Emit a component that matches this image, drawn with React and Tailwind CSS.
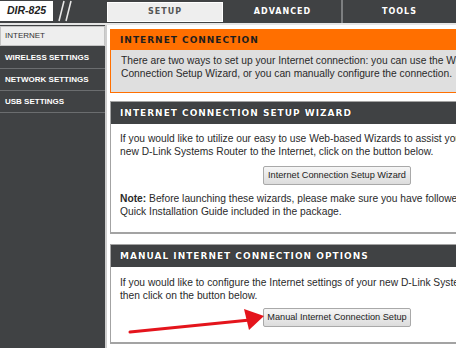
const body = { fontFamily: '"Liberation Sans", Arial, sans-serif' };
const head = { fontFamily: '"DejaVu Sans", Verdana, sans-serif' };

const SideItem = ({ label }) => (
    <div className="h-[22px] flex items-center pl-[5px] border-b border-[#6b6d6f] text-white font-bold text-[8px]" style={body}>
        {label}
    </div>
);

const Button = ({ label }) => (
    <div className="flex justify-center">
        <div className="w-[148px] h-[19px] flex items-center justify-center rounded-[2px] border border-[#a9a9a9] bg-gradient-to-b from-[#f6f6f6] to-[#dcdcdc] text-[9.2px] text-[#222]" style={body}>
            {label}
        </div>
    </div>
);

const DarkBox = ({ title, children, className }) => (
    <div className={"w-[454px] border border-b-2 border-[#a3a3a3] " + className}>
        <div className="h-[22px] bg-[#404244] flex items-center pl-[9px] text-white font-bold text-[9px] tracking-[1px] [text-shadow:0_0_1px_#000]" style={head}>
            {title}
        </div>
        {children}
    </div>
);

export default function App() {
    return (
        <div className="relative w-[456px] h-[348px] overflow-hidden bg-white">
            {/* top bar */}
            <div className="h-[23px] bg-[#404244] flex">
                <div className="w-[105px] flex items-start">
                    <div className="mt-[1px] w-[53px] h-[20px] bg-white flex items-center pl-[7px] text-[10.5px] font-bold italic text-[#222]" style={body}>
                        DIR-825
                    </div>
                    <svg width="22" height="23" viewBox="0 0 22 23" className="ml-[2px]">
                        <line x1="4" y1="21" x2="9" y2="1" stroke="#e8e8e8" strokeWidth="1.6" />
                        <line x1="11" y1="21" x2="16" y2="1" stroke="#e8e8e8" strokeWidth="1.6" />
                    </svg>
                </div>
                <div className="flex flex-1 pl-[2px] font-bold text-[8px] tracking-[1px]" style={head}>
                    <div className="w-[116px] mt-[2px] h-[20px] bg-[#eeeeee] border border-white flex items-center justify-center text-[#555]">SETUP</div>
                    <div className="w-[117px] ml-[1px] flex items-center justify-center text-white">ADVANCED</div>
                    <div className="w-[2px] bg-[#7d7f81]"></div>
                    <div className="flex-1 flex items-center justify-center text-white">TOOLS</div>
                </div>
            </div>
            <div className="h-[2px] bg-[#e6e6e6]"></div>

            <div className="flex h-[323px]">
                {/* sidebar */}
                <div className="w-[105px] shrink-0 bg-[#404244] pt-[1px]">
                    <div className="h-[20px] bg-[#eeeeee] border border-[#c4c4c4] flex items-center pl-[4px] text-[8px] text-[#333]" style={body}>
                        INTERNET
                    </div>
                    <div className="h-[1px]"></div>
                    <SideItem label="WIRELESS SETTINGS" />
                    <SideItem label="NETWORK SETTINGS" />
                    <SideItem label="USB SETTINGS" />
                </div>
                <div className="w-[2px] shrink-0 bg-[#cfcfcf]"></div>

                {/* content */}
                <div className="pl-[3px] pt-[4px] shrink-0 text-[10.25px] leading-[13px] text-[#2a2a2a] whitespace-nowrap" style={body}>
                    <div className="w-[454px] border border-[#ff6f00]">
                        <div className="h-[20px] bg-[#ff6f00] flex items-center pl-[9px] text-[#1e1e1e] font-bold text-[9px] tracking-[1px]" style={head}>
                            INTERNET CONNECTION
                        </div>
                        <div className="bg-[#dfdfdf] px-[10px] pt-[4px] pb-[12px]">
                            <p>There are two ways to set up your Internet connection: you can use the Web-based Internet</p>
                            <p>Connection Setup Wizard, or you can manually configure the connection.</p>
                        </div>
                    </div>

                    <DarkBox title="INTERNET CONNECTION SETUP WIZARD" className="mt-[8px]">
                        <div className="px-[9px] pt-[8px] pb-[14px]">
                            <p>If you would like to utilize our easy to use Web-based Wizards to assist you with connecting your</p>
                            <p>new D-Link Systems Router to the Internet, click on the button below.</p>
                            <div className="mt-[8px]">
                                <Button label="Internet Connection Setup Wizard" />
                            </div>
                            <p className="mt-[7px]"><b>Note:</b> Before launching these wizards, please make sure you have followed all steps outlined in the</p>
                            <p>Quick Installation Guide included in the package.</p>
                        </div>
                    </DarkBox>

                    <DarkBox title="MANUAL INTERNET CONNECTION OPTIONS" className="mt-[10px]">
                        <div className="px-[9px] pt-[9px] pb-[15px]">
                            <p>If you would like to configure the Internet settings of your new D-Link Systems Router manually,</p>
                            <p>then click on the button below.</p>
                            <div className="mt-[6px]">
                                <Button label="Manual Internet Connection Setup" />
                            </div>
                        </div>
                    </DarkBox>
                </div>
            </div>

            {/* red arrow annotation */}
            <svg className="absolute left-0 top-0 pointer-events-none" width="456" height="348" viewBox="0 0 456 348">
                <line x1="130" y1="332" x2="250" y2="320" stroke="#e4141c" strokeWidth="3" strokeLinecap="round" />
                <polygon points="264,316 244,309 249,330" fill="#e4141c" />
            </svg>
        </div>
    );
}
